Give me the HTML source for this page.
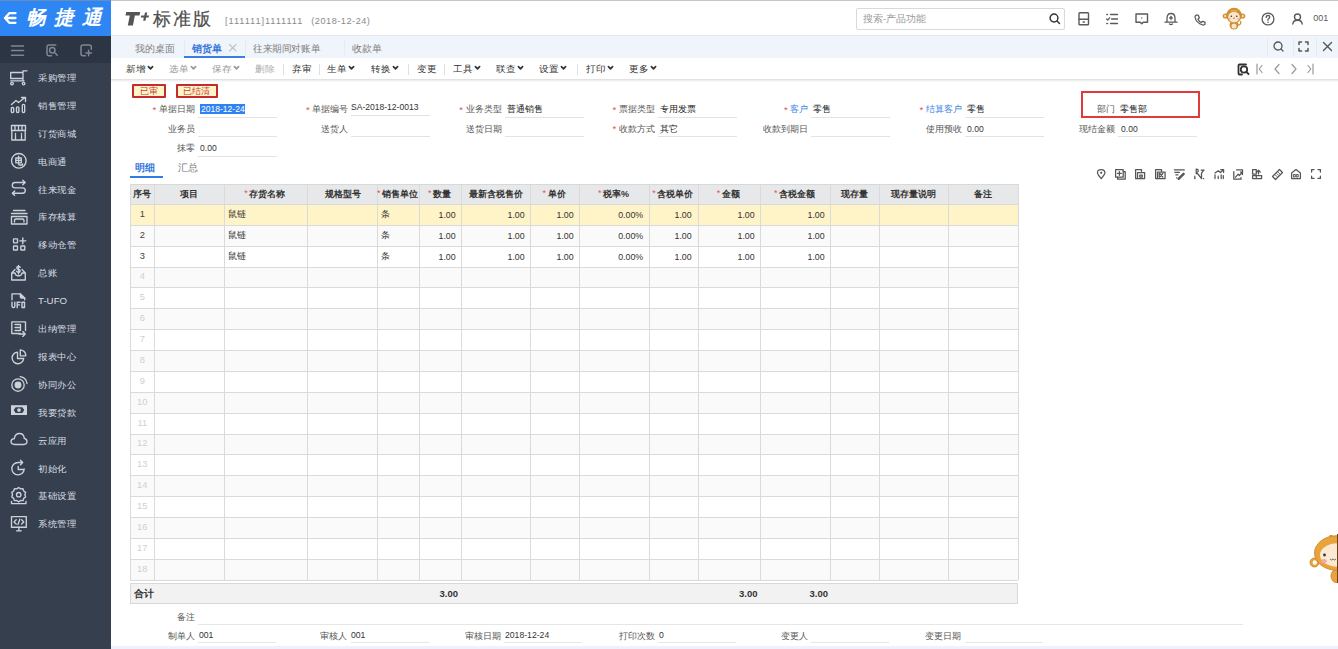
<!DOCTYPE html>
<html><head><meta charset="utf-8"><style>
html,body{margin:0;padding:0;width:1338px;height:649px;overflow:hidden;background:#fff;font-family:"Liberation Sans", sans-serif;}
.t{position:absolute;white-space:nowrap;line-height:1.2;}
.r{position:absolute;}
svg{overflow:visible;}
</style></head><body>
<div class="r" style="left:0px;top:0px;width:111px;height:649px;background:#353f4e;"></div>
<div class="r" style="left:0px;top:0px;width:111px;height:36px;background:#2e86f5;"></div>
<div class="r" style="left:0px;top:36px;width:111px;height:26.6px;background:#2c3544;"></div>
<svg style="position:absolute;left:0px;top:0px" width="20" height="36" viewBox="0 0 20 36" fill="none" stroke="#fff" stroke-width="2.3" stroke-linecap="round" stroke-linejoin="round" stroke-linecap="butt" stroke-linejoin="miter"><path d="M15.5 13.2H9.3L5 18L9.3 22.8H15.5M5.5 18H15.5"/></svg>
<div class="t" style="left:25.5px;top:6.2px;font-size:19.5px;color:#fff;font-weight:bold;font-style:italic;letter-spacing:8.3px;">畅捷通</div>
<svg style="position:absolute;left:11.2px;top:44.5px" width="13" height="12" viewBox="0 0 13 12" fill="none" stroke="#80868f" stroke-width="1.5" stroke-linecap="round" stroke-linejoin="round" stroke-linecap="butt"><path d="M0.5 1H12.5M0.5 5.6H12.5M0.5 10.3H12.5"/></svg>
<svg style="position:absolute;left:45.8px;top:44.2px" width="12" height="12" viewBox="0 0 12 12" fill="none" stroke="#80868f" stroke-width="1.5" stroke-linecap="round" stroke-linejoin="round" ><path d="M9.8 1H3Q1 1 1 3V9.8Q1 11.8 3 11.8H5.5"/><circle cx="6.3" cy="6.2" r="2.7"/><path d="M8.3 8.2L11.3 11.3"/></svg>
<svg style="position:absolute;left:79.8px;top:44.2px" width="12" height="12" viewBox="0 0 12 12" fill="none" stroke="#80868f" stroke-width="1.5" stroke-linecap="round" stroke-linejoin="round" stroke-linecap="butt"><path d="M11.3 5.2V3Q11.3 1 9.3 1H3Q1 1 1 3V9.8Q1 11.8 3 11.8H5.3"/><path d="M8.6 6.2V11.8M5.8 9H11.5"/></svg>
<svg style="position:absolute;left:11px;top:69.5px" width="16" height="16" viewBox="0 0 16 16" fill="none" stroke="#cdd2da" stroke-width="1.35" stroke-linecap="round" stroke-linejoin="round" ><path d="M16 0.8H12V10.5M-0.3 2.5H12M-0.3 2.5V8.5H12M-0.3 10.8H13"/><circle cx="1" cy="13.6" r="1.3"/><circle cx="12.6" cy="13.6" r="1.3"/></svg>
<div class="t" style="left:38.4px;top:71.9px;font-size:10px;color:#dadde3;font-weight:normal;transform:scale(0.97,0.93);transform-origin:0 50%;">采购管理</div>
<svg style="position:absolute;left:11px;top:97.4px" width="16" height="16" viewBox="0 0 16 16" fill="none" stroke="#cdd2da" stroke-width="1.35" stroke-linecap="round" stroke-linejoin="round" ><path d="M0.5 7.5L5 3.5L7.5 5.5L14 0.5M10.5 0.5H14.5V4.5"/><rect x="0.3" y="10.5" width="2.4" height="5" rx="1.1"/><rect x="5.5" y="9.8" width="2.4" height="5.7" rx="1.1"/><rect x="11.3" y="7.3" width="2.4" height="8.2" rx="1.1"/></svg>
<div class="t" style="left:38.4px;top:99.8px;font-size:10px;color:#dadde3;font-weight:normal;transform:scale(0.97,0.93);transform-origin:0 50%;">销售管理</div>
<svg style="position:absolute;left:11px;top:125.3px" width="16" height="16" viewBox="0 0 16 16" fill="none" stroke="#cdd2da" stroke-width="1.35" stroke-linecap="round" stroke-linejoin="round" ><path d="M0.5 0.5H14.5V5.5H0.5ZM4 0.5V5.5M7.5 0.5V5.5M11 0.5V5.5M0.8 5.5V15H14.2V5.5M4.5 15V10.5M10.5 15V10.5"/><path d="M4.5 8.5V9.3M10.5 8.5V9.3"/></svg>
<div class="t" style="left:38.4px;top:127.7px;font-size:10px;color:#dadde3;font-weight:normal;transform:scale(0.97,0.93);transform-origin:0 50%;">订货商城</div>
<svg style="position:absolute;left:11px;top:153.2px" width="16" height="16" viewBox="0 0 16 16" fill="none" stroke="#cdd2da" stroke-width="1.35" stroke-linecap="round" stroke-linejoin="round" ><circle cx="7.8" cy="7.8" r="7.3"/><path d="M4.8 5H10.3V9.8H4.8ZM4.8 7.4H10.3M7.6 3.2V10.8Q7.6 12 8.8 12H11.5V11"/></svg>
<div class="t" style="left:38.4px;top:155.6px;font-size:10px;color:#dadde3;font-weight:normal;transform:scale(0.97,0.93);transform-origin:0 50%;">电商通</div>
<svg style="position:absolute;left:11px;top:181.1px" width="16" height="16" viewBox="0 0 16 16" fill="none" stroke="#cdd2da" stroke-width="1.35" stroke-linecap="round" stroke-linejoin="round" ><path d="M14 1.5H4Q1.3 1.5 1.3 4.2Q1.3 6.8 4 6.8H11.5Q14.3 6.8 14.3 9.5Q14.3 12.2 11.5 12.2H1.5M11.8 -0.7L14.2 1.5L11.8 3.7M3.7 10L1.3 12.2L3.7 14.4"/></svg>
<div class="t" style="left:38.4px;top:183.5px;font-size:10px;color:#dadde3;font-weight:normal;transform:scale(0.97,0.93);transform-origin:0 50%;">往来现金</div>
<svg style="position:absolute;left:11px;top:209.0px" width="16" height="16" viewBox="0 0 16 16" fill="none" stroke="#cdd2da" stroke-width="1.35" stroke-linecap="round" stroke-linejoin="round" ><path d="M2.5 1.5H14M0.5 4.5H16M0.5 7.5H16V15H0.5ZM3.5 13V11.5Q3.5 10 5 10H11.5Q13 10 13 11.5V13"/></svg>
<div class="t" style="left:38.4px;top:211.4px;font-size:10px;color:#dadde3;font-weight:normal;transform:scale(0.97,0.93);transform-origin:0 50%;">库存核算</div>
<svg style="position:absolute;left:11px;top:236.9px" width="16" height="16" viewBox="0 0 16 16" fill="none" stroke="#cdd2da" stroke-width="1.35" stroke-linecap="round" stroke-linejoin="round" ><rect x="2.5" y="1.8" width="4" height="4" rx="0.5"/><rect x="2.5" y="9" width="4" height="4" rx="0.5"/><rect x="9.8" y="9" width="4" height="4" rx="0.5"/><path d="M11.8 0.8V6.8M8.8 3.8H14.8"/></svg>
<div class="t" style="left:38.4px;top:239.3px;font-size:10px;color:#dadde3;font-weight:normal;transform:scale(0.97,0.93);transform-origin:0 50%;">移动仓管</div>
<svg style="position:absolute;left:11px;top:264.8px" width="16" height="16" viewBox="0 0 16 16" fill="none" stroke="#cdd2da" stroke-width="1.35" stroke-linecap="round" stroke-linejoin="round" ><path d="M4 4.5L0.7 8V15H14.3V8L11 4.5M0.7 8H4Q4.5 11 7.5 11Q10.5 11 11 8H14.3"/><path d="M9.3 2.3Q8.5 1.3 7.2 1.5Q5.6 1.8 5.8 3.2Q6 4.2 7.5 4.5Q9.3 4.9 9.2 6.1Q9 7.4 7.4 7.4Q6 7.4 5.5 6.3M7.5 0.3V9"/></svg>
<div class="t" style="left:38.4px;top:267.2px;font-size:10px;color:#dadde3;font-weight:normal;transform:scale(0.97,0.93);transform-origin:0 50%;">总账</div>
<svg style="position:absolute;left:11px;top:292.7px" width="16" height="16" viewBox="0 0 16 16" fill="none" stroke="#cdd2da" stroke-width="1.35" stroke-linecap="round" stroke-linejoin="round" ><path d="M1 6.8V0.8H9.3L13.7 5V6.8"/><path d="M9.3 0.8V3.5Q9.3 5 10.8 5H13.7" fill="#cdd2da"/><path d="M1 9.3V13.3Q1 14.5 2.5 14.5Q3.8 14.5 3.8 13.3V9.3M6.2 14.8V9.3H9M6.2 11.9H8.5M11 9.3H13.5V14.5H11Z" stroke-width="1.4"/></svg>
<div class="t" style="left:38.4px;top:295.1px;font-size:10px;color:#dadde3;font-weight:normal;transform:scale(0.97,0.93);transform-origin:0 50%;">T-UFO</div>
<svg style="position:absolute;left:11px;top:320.6px" width="16" height="16" viewBox="0 0 16 16" fill="none" stroke="#cdd2da" stroke-width="1.35" stroke-linecap="round" stroke-linejoin="round" ><path d="M14.5 9.5V0.8H0.8V12.5H9"/><path d="M4 3.5H9.5V9.5H4M4 6.5H8.5M8 13H14.2M11.8 10.6L14.2 13L11.8 15.4"/></svg>
<div class="t" style="left:38.4px;top:323.0px;font-size:10px;color:#dadde3;font-weight:normal;transform:scale(0.97,0.93);transform-origin:0 50%;">出纳管理</div>
<svg style="position:absolute;left:11px;top:348.5px" width="16" height="16" viewBox="0 0 16 16" fill="none" stroke="#cdd2da" stroke-width="1.35" stroke-linecap="round" stroke-linejoin="round" ><path d="M6.5 3.2A5.8 5.8 0 1 0 12.7 9.5H6.5Z"/><path d="M9.3 0.8V6.8H14.8Q14.8 1.5 9.3 0.8Z"/></svg>
<div class="t" style="left:38.4px;top:350.9px;font-size:10px;color:#dadde3;font-weight:normal;transform:scale(0.97,0.93);transform-origin:0 50%;">报表中心</div>
<svg style="position:absolute;left:11px;top:376.4px" width="16" height="16" viewBox="0 0 16 16" fill="none" stroke="#cdd2da" stroke-width="1.35" stroke-linecap="round" stroke-linejoin="round" ><circle cx="7" cy="9" r="6.2"/><circle cx="7" cy="9" r="2.8" fill="#cdd2da"/><path d="M9.2 0.7Q15.2 1.5 16 7.5"/></svg>
<div class="t" style="left:38.4px;top:378.8px;font-size:10px;color:#dadde3;font-weight:normal;transform:scale(0.97,0.93);transform-origin:0 50%;">协同办公</div>
<svg style="position:absolute;left:11px;top:404.3px" width="16" height="16" viewBox="0 0 16 16" fill="none" stroke="#cdd2da" stroke-width="1.35" stroke-linecap="round" stroke-linejoin="round" ><rect x="0" y="1.2" width="16" height="9.8" fill="#cdd2da" stroke="none"/><path d="M2.8 6.1L4.6 3.2H11.4L13.2 6.1L11.4 9H4.6Z" fill="#353f4e" stroke="none"/><circle cx="8" cy="6.1" r="1.9" fill="#cdd2da" stroke="none"/></svg>
<div class="t" style="left:38.4px;top:406.7px;font-size:10px;color:#dadde3;font-weight:normal;transform:scale(0.97,0.93);transform-origin:0 50%;">我要贷款</div>
<svg style="position:absolute;left:11px;top:432.2px" width="16" height="16" viewBox="0 0 16 16" fill="none" stroke="#cdd2da" stroke-width="1.35" stroke-linecap="round" stroke-linejoin="round" ><path d="M3.8 12.5Q0 12.5 0 9.6Q0 6.9 3.3 6.6Q4 1.5 8.5 1.5Q12.7 1.5 13.3 6.3Q16 6.9 16 9.6Q16 12.5 12.6 12.5Z"/></svg>
<div class="t" style="left:38.4px;top:434.6px;font-size:10px;color:#dadde3;font-weight:normal;transform:scale(0.97,0.93);transform-origin:0 50%;">云应用</div>
<svg style="position:absolute;left:11px;top:460.1px" width="16" height="16" viewBox="0 0 16 16" fill="none" stroke="#cdd2da" stroke-width="1.35" stroke-linecap="round" stroke-linejoin="round" ><path d="M13.2 9A6.2 6.2 0 1 1 7 2.5H11.5M9.5 0.3L11.7 2.5L9.5 4.7"/><path d="M7.2 6.5V9.5H12.5"/></svg>
<div class="t" style="left:38.4px;top:462.5px;font-size:10px;color:#dadde3;font-weight:normal;transform:scale(0.97,0.93);transform-origin:0 50%;">初始化</div>
<svg style="position:absolute;left:11px;top:488.0px" width="16" height="16" viewBox="0 0 16 16" fill="none" stroke="#cdd2da" stroke-width="1.35" stroke-linecap="round" stroke-linejoin="round" ><path d="M7.7 -0.5L9.6 0.9L12 0.7L12.7 3L14.6 4.4L13.9 6.7L14.6 9L12.7 10.4L12 12.7L9.6 12.5L7.7 13.9L5.8 12.5L3.4 12.7L2.7 10.4L0.8 9L1.5 6.7L0.8 4.4L2.7 3L3.4 0.7L5.8 0.9Z"/><circle cx="7.7" cy="6.7" r="2.2"/><path d="M0.5 13.3V15.6H15V13.3"/></svg>
<div class="t" style="left:38.4px;top:490.4px;font-size:10px;color:#dadde3;font-weight:normal;transform:scale(0.97,0.93);transform-origin:0 50%;">基础设置</div>
<svg style="position:absolute;left:11px;top:515.9px" width="16" height="16" viewBox="0 0 16 16" fill="none" stroke="#cdd2da" stroke-width="1.35" stroke-linecap="round" stroke-linejoin="round" ><rect x="0.5" y="0.6" width="14.8" height="10.6"/><path d="M5.5 14.8H10.3M7.9 11.2V14.8M5.2 3.8L3 5.9L5.2 8M10.6 3.8L12.8 5.9L10.6 8M8.8 3.3L7 8.5"/></svg>
<div class="t" style="left:38.4px;top:518.3px;font-size:10px;color:#dadde3;font-weight:normal;transform:scale(0.97,0.93);transform-origin:0 50%;">系统管理</div>
<div class="r" style="left:111px;top:0px;width:1227px;height:36px;background:#fff;"></div>
<div class="r" style="left:111px;top:35px;width:1227px;height:1px;background:#e3e6ea;"></div>
<svg style="position:absolute;left:0;top:0" width="160" height="36"><path fill="#555" d="M126.2 12H140.2L139.5 15.6H134.9L132.9 25.6H127.8L129.8 15.6H125.5Z"/><path fill="#555" d="M145 12.5H147.3L146.6 15.4H149L148.6 17.6H146.1L145.5 20.7H143.2L143.8 17.6H140.8L141.2 15.4H144.3Z"/></svg>
<div class="t" style="left:152.5px;top:8.6px;font-size:17.5px;color:#4d4d4d;font-weight:normal;letter-spacing:2.2px;-webkit-text-stroke:0.2px #4d4d4d;">标准版</div>
<div class="t" style="left:225px;top:16.3px;font-size:9.2px;color:#8a8a8a;font-weight:normal;letter-spacing:0.95px;">[111111]1111111</div>
<div class="t" style="left:311.3px;top:16.3px;font-size:9.2px;color:#8a8a8a;font-weight:normal;letter-spacing:0.5px;">(2018-12-24)</div>
<div class="r" style="left:856px;top:7.8px;width:208.5px;height:22px;background:#fff;border:1px solid #d9d9d9;box-sizing:border-box;border-radius:2px;"></div>
<div class="t" style="left:863px;top:13px;font-size:9.5px;color:#9a9a9a;font-weight:normal;">搜索-产品功能</div>
<svg style="position:absolute;left:1048.8px;top:13.2px" width="12" height="12" viewBox="0 0 12 12" fill="none" stroke="#333" stroke-width="1.45" stroke-linecap="round" stroke-linejoin="round" ><circle cx="5" cy="5" r="3.9"/><path d="M8 8L10.5 10.5"/></svg>
<svg style="position:absolute;left:1077.5px;top:12.2px" width="12" height="14" viewBox="0 0 12 14" fill="none" stroke="#5a5a5a" stroke-width="1.4" stroke-linecap="round" stroke-linejoin="round" ><rect x="1" y="0.8" width="9.5" height="12" rx="0.8"/><path d="M1 7.3H10.5"/><path d="M5.2 10H6.3" stroke-width="1.6"/></svg>
<svg style="position:absolute;left:1106px;top:12.5px" width="12" height="12" viewBox="0 0 12 12" fill="none" stroke="#5a5a5a" stroke-width="1.3" stroke-linecap="round" stroke-linejoin="round" ><path d="M4.5 1.5H11.5M5.5 6H11.5M4.5 10.5H11.5M0.8 1.5H1.6M0.8 10.5H1.6M0.7 6L1.8 7.1L3.6 4.8"/></svg>
<svg style="position:absolute;left:1135px;top:13px" width="13.5" height="12" viewBox="0 0 13.5 12" fill="none" stroke="#5a5a5a" stroke-width="1.4" stroke-linecap="round" stroke-linejoin="round" ><path d="M1 1H12.5V9.2H8.3L6.75 10.8L5.2 9.2H1Z"/><circle cx="6.75" cy="5" r="0.7" fill="#5a5a5a" stroke="none"/></svg>
<svg style="position:absolute;left:1164px;top:12px" width="14" height="13" viewBox="0 0 14 13" fill="none" stroke="#5a5a5a" stroke-width="1.3" stroke-linecap="round" stroke-linejoin="round" ><path d="M3 10.2V6.2Q3 1.5 7 1.5Q11 1.5 11 6.2V10.2M1 10.2H13M5.5 12Q7 13.2 8.5 12M7 4.5V7.5M5.8 6L7 4.8L8.2 6"/></svg>
<svg style="position:absolute;left:1194px;top:13.5px" width="12" height="12" viewBox="0 0 12 12" fill="none" stroke="#5a5a5a" stroke-width="1.3" stroke-linecap="round" stroke-linejoin="round" ><path d="M2.3 1.2L4.3 1.2L5.3 3.8L4 5.2Q5 7.5 7.2 8.5L8.5 7.3L11 8.2V10.2Q10.3 11.2 8.8 11Q2 9 1 3Q1.2 1.5 2.3 1.2Z"/></svg>
<svg style="position:absolute;left:1222px;top:7px" width="24" height="23" viewBox="0 0 24 23"><circle cx="3.3" cy="9" r="2.6" fill="#d08f30"/><circle cx="20.7" cy="9" r="2.6" fill="#d08f30"/><circle cx="3.3" cy="9" r="1.2" fill="#f5dcc0"/><circle cx="20.7" cy="9" r="1.2" fill="#f5dcc0"/><path d="M16 18Q19.5 18 18.5 14" stroke="#d08f30" stroke-width="1.3" fill="none"/><ellipse cx="12" cy="18" rx="4.5" ry="4.5" fill="#d08f30"/><ellipse cx="12" cy="19" rx="2.5" ry="2.6" fill="#fbe6cc"/><circle cx="12" cy="8.6" r="7.8" fill="#d08f30"/><ellipse cx="12" cy="10" rx="5.8" ry="5.2" fill="#fbe6cc"/><path d="M8 3.8Q12 1.5 16 3.8Q14 5.3 12 4.2Q10 5.3 8 3.8Z" fill="#e8a845"/><circle cx="9.3" cy="9.3" r="0.8" fill="#333"/><circle cx="14.7" cy="9.3" r="0.8" fill="#333"/><ellipse cx="12" cy="11.2" rx="1" ry="0.8" fill="#c77"/><circle cx="7.8" cy="11.8" r="1.1" fill="#f5b5b5"/><circle cx="16.2" cy="11.8" r="1.1" fill="#f5b5b5"/></svg>
<svg style="position:absolute;left:1261.3px;top:11.6px" width="14" height="14" viewBox="0 0 14 14" fill="none" stroke="#5a5a5a" stroke-width="1.3" stroke-linecap="round" stroke-linejoin="round" ><circle cx="7" cy="7" r="5.9"/><path d="M5.2 5.4Q5.2 3.5 7 3.5Q8.8 3.5 8.8 5.1Q8.8 6.2 7 7.2V8.3M7 10.2V10.4"/></svg>
<svg style="position:absolute;left:1291.5px;top:12.8px" width="11" height="12" viewBox="0 0 11 12" fill="none" stroke="#5a5a5a" stroke-width="1.4" stroke-linecap="round" stroke-linejoin="round" ><circle cx="5.5" cy="4" r="3"/><path d="M0.8 11Q1.2 7.3 5.5 7.3Q9.8 7.3 10.2 11"/></svg>
<div class="t" style="left:1313.3px;top:12.8px;font-size:9px;color:#5a5a5a;font-weight:normal;">001</div>
<div class="r" style="left:0px;top:0px;width:1338px;height:1px;background:rgba(150,150,150,0.55);"></div>
<div class="r" style="left:111px;top:36px;width:1227px;height:22px;background:#f0f4fb;"></div>
<div class="t" style="left:134.8px;top:42.8px;font-size:9.6px;color:#808080;font-weight:normal;">我的桌面</div>
<div class="t" style="left:191.5px;top:42.8px;font-size:9.6px;color:#3578de;font-weight:bold;">销货单</div>
<svg style="position:absolute;left:229.2px;top:44.2px" width="7.5" height="7.5" viewBox="0 0 7.5 7.5" fill="none" stroke="#c2c2c2" stroke-width="1.1" stroke-linecap="round" stroke-linejoin="round" ><path d="M0.5 0.5L7 7M7 0.5L0.5 7"/></svg>
<div class="r" style="left:184px;top:56px;width:61px;height:2px;background:#3a7ee2;"></div>
<div class="r" style="left:183.5px;top:39px;width:1px;height:16px;background:#e6ebf3;"></div>
<div class="r" style="left:244.5px;top:39px;width:1px;height:16px;background:#e6ebf3;"></div>
<div class="t" style="left:252.7px;top:42.8px;font-size:10px;color:#808080;font-weight:normal;transform:scaleX(0.96);transform-origin:0 0;">往来期间对账单</div>
<div class="r" style="left:344px;top:39px;width:1px;height:16px;background:#e6ebf3;"></div>
<div class="t" style="left:352px;top:42.8px;font-size:9.6px;color:#808080;font-weight:normal;">收款单</div>
<div class="r" style="left:1267px;top:38px;width:1px;height:18px;background:#e6ebf3;"></div>
<div class="r" style="left:1292.5px;top:38px;width:1px;height:18px;background:#e6ebf3;"></div>
<div class="r" style="left:1316px;top:38px;width:1px;height:18px;background:#e6ebf3;"></div>
<svg style="position:absolute;left:1272.5px;top:41px" width="11" height="11" viewBox="0 0 11 11" fill="none" stroke="#555" stroke-width="1.3" stroke-linecap="round" stroke-linejoin="round" ><circle cx="5" cy="5" r="4"/><path d="M8 8L10 10"/></svg>
<svg style="position:absolute;left:1298px;top:41px" width="11" height="11" viewBox="0 0 11 11" fill="none" stroke="#555" stroke-width="1.5" stroke-linecap="round" stroke-linejoin="round" stroke-linecap="butt" stroke-linejoin="miter"><path d="M1 3.5V1H3.5M7.5 1H10V3.5M10 7.5V10H7.5M3.5 10H1V7.5"/></svg>
<svg style="position:absolute;left:1322px;top:41px" width="11" height="11" viewBox="0 0 11 11" fill="none" stroke="#555" stroke-width="1.4" stroke-linecap="round" stroke-linejoin="round" ><path d="M1.5 1.5L9.5 9.5M9.5 1.5L1.5 9.5"/></svg>
<div class="r" style="left:111px;top:58px;width:1227px;height:21px;background:#fff;"></div>
<div class="r" style="left:111px;top:79px;width:1227px;height:1px;background:#e2e2e2;"></div>
<div class="r" style="left:111px;top:80px;width:1227px;height:1px;background:#f0f0f0;"></div>
<div class="r" style="left:111px;top:81px;width:1227px;height:1px;background:#f8f8f8;"></div>
<div class="t" style="left:125.5px;top:63.0px;font-size:10px;color:#333;font-weight:normal;transform:scale(0.96,0.9);transform-origin:0 50%;">新增</div>
<svg style="position:absolute;left:146.7px;top:64.6px" width="7" height="6" viewBox="0 0 7 6" fill="none" stroke="#333" stroke-width="1.7" stroke-linecap="round" stroke-linejoin="round" stroke-linecap="butt"><path d="M1.4 1.7L3.5 3.8L5.6 1.7"/></svg>
<div class="t" style="left:168.5px;top:63.0px;font-size:10px;color:#999;font-weight:normal;transform:scale(0.96,0.9);transform-origin:0 50%;">选单</div>
<svg style="position:absolute;left:189.7px;top:64.6px" width="7" height="6" viewBox="0 0 7 6" fill="none" stroke="#999" stroke-width="1.7" stroke-linecap="round" stroke-linejoin="round" stroke-linecap="butt"><path d="M1.4 1.7L3.5 3.8L5.6 1.7"/></svg>
<div class="t" style="left:212px;top:63.0px;font-size:10px;color:#999;font-weight:normal;transform:scale(0.96,0.9);transform-origin:0 50%;">保存</div>
<svg style="position:absolute;left:233.2px;top:64.6px" width="7" height="6" viewBox="0 0 7 6" fill="none" stroke="#999" stroke-width="1.7" stroke-linecap="round" stroke-linejoin="round" stroke-linecap="butt"><path d="M1.4 1.7L3.5 3.8L5.6 1.7"/></svg>
<div class="t" style="left:254.5px;top:63.0px;font-size:10px;color:#aaa;font-weight:normal;transform:scale(0.96,0.9);transform-origin:0 50%;">删除</div>
<div class="t" style="left:291.5px;top:63.0px;font-size:10px;color:#333;font-weight:normal;transform:scale(0.96,0.9);transform-origin:0 50%;">弃审</div>
<div class="t" style="left:327px;top:63.0px;font-size:10px;color:#333;font-weight:normal;transform:scale(0.96,0.9);transform-origin:0 50%;">生单</div>
<svg style="position:absolute;left:348.2px;top:64.6px" width="7" height="6" viewBox="0 0 7 6" fill="none" stroke="#333" stroke-width="1.7" stroke-linecap="round" stroke-linejoin="round" stroke-linecap="butt"><path d="M1.4 1.7L3.5 3.8L5.6 1.7"/></svg>
<div class="t" style="left:371px;top:63.0px;font-size:10px;color:#333;font-weight:normal;transform:scale(0.96,0.9);transform-origin:0 50%;">转换</div>
<svg style="position:absolute;left:392.2px;top:64.6px" width="7" height="6" viewBox="0 0 7 6" fill="none" stroke="#333" stroke-width="1.7" stroke-linecap="round" stroke-linejoin="round" stroke-linecap="butt"><path d="M1.4 1.7L3.5 3.8L5.6 1.7"/></svg>
<div class="t" style="left:416.5px;top:63.0px;font-size:10px;color:#333;font-weight:normal;transform:scale(0.96,0.9);transform-origin:0 50%;">变更</div>
<div class="t" style="left:453px;top:63.0px;font-size:10px;color:#333;font-weight:normal;transform:scale(0.96,0.9);transform-origin:0 50%;">工具</div>
<svg style="position:absolute;left:474.2px;top:64.6px" width="7" height="6" viewBox="0 0 7 6" fill="none" stroke="#333" stroke-width="1.7" stroke-linecap="round" stroke-linejoin="round" stroke-linecap="butt"><path d="M1.4 1.7L3.5 3.8L5.6 1.7"/></svg>
<div class="t" style="left:496px;top:63.0px;font-size:10px;color:#333;font-weight:normal;transform:scale(0.96,0.9);transform-origin:0 50%;">联查</div>
<svg style="position:absolute;left:517.2px;top:64.6px" width="7" height="6" viewBox="0 0 7 6" fill="none" stroke="#333" stroke-width="1.7" stroke-linecap="round" stroke-linejoin="round" stroke-linecap="butt"><path d="M1.4 1.7L3.5 3.8L5.6 1.7"/></svg>
<div class="t" style="left:539px;top:63.0px;font-size:10px;color:#333;font-weight:normal;transform:scale(0.96,0.9);transform-origin:0 50%;">设置</div>
<svg style="position:absolute;left:560.2px;top:64.6px" width="7" height="6" viewBox="0 0 7 6" fill="none" stroke="#333" stroke-width="1.7" stroke-linecap="round" stroke-linejoin="round" stroke-linecap="butt"><path d="M1.4 1.7L3.5 3.8L5.6 1.7"/></svg>
<div class="t" style="left:585.5px;top:63.0px;font-size:10px;color:#333;font-weight:normal;transform:scale(0.96,0.9);transform-origin:0 50%;">打印</div>
<svg style="position:absolute;left:606.7px;top:64.6px" width="7" height="6" viewBox="0 0 7 6" fill="none" stroke="#333" stroke-width="1.7" stroke-linecap="round" stroke-linejoin="round" stroke-linecap="butt"><path d="M1.4 1.7L3.5 3.8L5.6 1.7"/></svg>
<div class="t" style="left:628.5px;top:63.0px;font-size:10px;color:#333;font-weight:normal;transform:scale(0.96,0.9);transform-origin:0 50%;">更多</div>
<svg style="position:absolute;left:649.7px;top:64.6px" width="7" height="6" viewBox="0 0 7 6" fill="none" stroke="#333" stroke-width="1.7" stroke-linecap="round" stroke-linejoin="round" stroke-linecap="butt"><path d="M1.4 1.7L3.5 3.8L5.6 1.7"/></svg>
<div class="r" style="left:282.5px;top:64px;width:1px;height:10.5px;background:#e0e0e0;"></div>
<div class="r" style="left:319px;top:64px;width:1px;height:10.5px;background:#e0e0e0;"></div>
<div class="r" style="left:408px;top:64px;width:1px;height:10.5px;background:#e0e0e0;"></div>
<div class="r" style="left:444px;top:64px;width:1px;height:10.5px;background:#e0e0e0;"></div>
<div class="r" style="left:576.5px;top:64px;width:1px;height:10.5px;background:#e0e0e0;"></div>
<svg style="position:absolute;left:1237px;top:63px" width="12" height="12" viewBox="0 0 12 12" fill="none" stroke="#333" stroke-width="1.8" stroke-linecap="round" stroke-linejoin="round" ><path d="M9 1.5H2.5Q1.5 1.5 1.5 2.5V10.5Q1.5 11.5 2.5 11.5H5"/><circle cx="7" cy="6.5" r="3.2"/><path d="M9.3 8.8L11.5 11"/></svg>
<svg style="position:absolute;left:1256px;top:63px" width="8" height="12" viewBox="0 0 8 12" fill="none" stroke="#999" stroke-width="1.2" stroke-linecap="round" stroke-linejoin="round" ><path d="M1 1V11M6 2.5L3.2 6L6 9.5"/></svg>
<svg style="position:absolute;left:1273px;top:63px" width="8" height="12" viewBox="0 0 8 12" fill="none" stroke="#999" stroke-width="1.2" stroke-linecap="round" stroke-linejoin="round" ><path d="M6 1.5L2 6L6 10.5"/></svg>
<svg style="position:absolute;left:1289.5px;top:63px" width="8" height="12" viewBox="0 0 8 12" fill="none" stroke="#999" stroke-width="1.2" stroke-linecap="round" stroke-linejoin="round" ><path d="M2 1.5L6 6L2 10.5"/></svg>
<svg style="position:absolute;left:1306px;top:63px" width="8" height="12" viewBox="0 0 8 12" fill="none" stroke="#999" stroke-width="1.2" stroke-linecap="round" stroke-linejoin="round" ><path d="M7 1V11M2 2.5L4.8 6L2 9.5"/></svg>
<div class="r" style="left:131.5px;top:83.5px;width:34px;height:14px;box-sizing:border-box;border:2px solid #c42b2b;background:#fdf6c8;border-radius:1px"></div><div class="t" style="left:48.5px;width:200px;text-align:center;top:85.5px;font-size:8.7px;color:#d03a3a;font-weight:normal;">已审</div>
<div class="r" style="left:175.5px;top:83.5px;width:42px;height:14px;box-sizing:border-box;border:2px solid #c42b2b;background:#fdf6c8;border-radius:1px"></div><div class="t" style="left:96.5px;width:200px;text-align:center;top:85.5px;font-size:8.7px;color:#d03a3a;font-weight:normal;">已结清</div>
<div class="t" style="right:1143.2px;top:104.3px;font-size:9px;color:#555;font-weight:normal;">单据日期</div><div class="t" style="left:152.60000000000002px;top:104.10000000000001px;font-size:9.5px;color:#e05555;font-weight:normal;">*</div><div class="r" style="left:197.8px;top:116.8px;width:79px;height:1px;background:#e3e3e3;"></div>
<div class="r" style="left:199.8px;top:104px;width:45px;height:10px;background:#2f83f0;"></div>
<div class="t" style="left:200.5px;top:104px;font-size:9.2px;color:#fff;font-weight:normal;transform:scaleX(0.93);transform-origin:0 0;">2018-12-24</div>
<div class="t" style="right:989.7px;top:104.3px;font-size:9px;color:#555;font-weight:normal;">单据编号</div><div class="t" style="left:306.1px;top:104.10000000000001px;font-size:9.5px;color:#e05555;font-weight:normal;">*</div><div class="t" style="left:351.3px;top:102.3px;font-size:9.2px;color:#333;font-weight:normal;transform:scaleX(0.93);transform-origin:0 0;">SA-2018-12-0013</div><div class="r" style="left:351.3px;top:114.8px;width:79px;height:1px;background:#e3e3e3;"></div>
<div class="t" style="right:836.5px;top:104.3px;font-size:9px;color:#555;font-weight:normal;">业务类型</div><div class="t" style="left:459.3px;top:104.10000000000001px;font-size:9.5px;color:#e05555;font-weight:normal;">*</div><div class="t" style="left:506.5px;top:104.3px;font-size:9px;color:#222;font-weight:normal;">普通销售</div><div class="r" style="left:504.5px;top:116.8px;width:79px;height:1px;background:#e3e3e3;"></div>
<div class="t" style="right:683.2px;top:104.3px;font-size:9px;color:#555;font-weight:normal;">票据类型</div><div class="t" style="left:612.5999999999999px;top:104.10000000000001px;font-size:9.5px;color:#e05555;font-weight:normal;">*</div><div class="t" style="left:659.8px;top:104.3px;font-size:9px;color:#222;font-weight:normal;">专用发票</div><div class="r" style="left:657.8px;top:116.8px;width:79px;height:1px;background:#e3e3e3;"></div>
<div class="t" style="right:529.8px;top:104.3px;font-size:9px;color:#3b84e6;font-weight:normal;">客户</div><div class="t" style="left:784.0px;top:104.10000000000001px;font-size:9.5px;color:#e05555;font-weight:normal;">*</div><div class="t" style="left:813.2px;top:104.3px;font-size:9px;color:#222;font-weight:normal;">零售</div><div class="r" style="left:811.2px;top:116.8px;width:79px;height:1px;background:#e3e3e3;"></div>
<div class="t" style="right:376.29999999999995px;top:104.3px;font-size:9px;color:#3b84e6;font-weight:normal;">结算客户</div><div class="t" style="left:919.5px;top:104.10000000000001px;font-size:9.5px;color:#e05555;font-weight:normal;">*</div><div class="t" style="left:966.7px;top:104.3px;font-size:9px;color:#222;font-weight:normal;">零售</div><div class="r" style="left:964.7px;top:116.8px;width:79px;height:1px;background:#e3e3e3;"></div>
<div class="t" style="right:223.0px;top:104.3px;font-size:9px;color:#555;font-weight:normal;">部门</div><div class="t" style="left:1120.0px;top:104.3px;font-size:9px;color:#222;font-weight:normal;">零售部</div><div class="r" style="left:1118.0px;top:116.8px;width:79px;height:1px;background:#e3e3e3;"></div>
<div class="r" style="left:1081.3px;top:91px;width:119px;height:26.5px;background:transparent;border:2px solid #e03a3a;box-sizing:border-box;"></div>
<div class="t" style="right:1143.2px;top:123.6px;font-size:9px;color:#555;font-weight:normal;">业务员</div><div class="r" style="left:197.8px;top:136.1px;width:79px;height:1px;background:#e3e3e3;"></div>
<div class="t" style="right:989.7px;top:123.6px;font-size:9px;color:#555;font-weight:normal;">送货人</div><div class="r" style="left:351.3px;top:136.1px;width:79px;height:1px;background:#e3e3e3;"></div>
<div class="t" style="right:836.5px;top:123.6px;font-size:9px;color:#555;font-weight:normal;">送货日期</div><div class="r" style="left:504.5px;top:136.1px;width:79px;height:1px;background:#e3e3e3;"></div>
<div class="t" style="right:683.2px;top:123.6px;font-size:9px;color:#555;font-weight:normal;">收款方式</div><div class="t" style="left:612.5999999999999px;top:123.4px;font-size:9.5px;color:#e05555;font-weight:normal;">*</div><div class="t" style="left:659.8px;top:123.6px;font-size:9px;color:#222;font-weight:normal;">其它</div><div class="r" style="left:657.8px;top:136.1px;width:79px;height:1px;background:#e3e3e3;"></div>
<div class="t" style="right:529.8px;top:123.6px;font-size:9px;color:#555;font-weight:normal;">收款到期日</div><div class="r" style="left:811.2px;top:136.1px;width:79px;height:1px;background:#e3e3e3;"></div>
<div class="t" style="right:376.29999999999995px;top:123.6px;font-size:9px;color:#555;font-weight:normal;">使用预收</div><div class="t" style="left:967.2px;top:123.6px;font-size:9.2px;color:#333;font-weight:normal;transform:scaleX(0.93);transform-origin:0 0;">0.00</div><div class="r" style="left:964.7px;top:136.1px;width:79px;height:1px;background:#e3e3e3;"></div>
<div class="t" style="right:223.0px;top:123.6px;font-size:9px;color:#555;font-weight:normal;">现结金额</div><div class="t" style="left:1120.5px;top:123.6px;font-size:9.2px;color:#333;font-weight:normal;transform:scaleX(0.93);transform-origin:0 0;">0.00</div><div class="r" style="left:1118.0px;top:136.1px;width:79px;height:1px;background:#e3e3e3;"></div>
<div class="t" style="right:1143.2px;top:143.1px;font-size:9px;color:#555;font-weight:normal;">抹零</div><div class="t" style="left:200.3px;top:143.1px;font-size:9.2px;color:#333;font-weight:normal;transform:scaleX(0.93);transform-origin:0 0;">0.00</div><div class="r" style="left:197.8px;top:155.6px;width:79px;height:1px;background:#e3e3e3;"></div>
<div class="t" style="left:135px;top:162px;font-size:9.8px;color:#3578de;font-weight:bold;">明细</div>
<div class="t" style="left:178px;top:162px;font-size:10px;color:#777;font-weight:normal;">汇总</div>
<div class="r" style="left:130px;top:176px;width:33px;height:2px;background:#2e7ce6;"></div>
<svg style="position:absolute;left:1096.5px;top:169px" width="10" height="10" viewBox="0 0 10 10" fill="none" stroke="#555" stroke-width="1.25" stroke-linecap="round" stroke-linejoin="round" stroke-linecap="butt" stroke-linejoin="miter"><path d="M4.2 9.6Q0.5 5.5 0.5 3.8Q0.5 0.5 4.2 0.5Q7.9 0.5 7.9 3.8Q7.9 5.5 4.2 9.6Z"/><circle cx="4.2" cy="3.8" r="1.1" fill="#555" stroke="none"/></svg>
<svg style="position:absolute;left:1115.3px;top:169px" width="10" height="10" viewBox="0 0 10 10" fill="none" stroke="#555" stroke-width="1.25" stroke-linecap="round" stroke-linejoin="round" stroke-linecap="butt" stroke-linejoin="miter"><path d="M0.6 0.6H8.2V8.2H0.6Z"/><path d="M2.6 8.2V10.2H10.2V2.6H8.2"/><path d="M4.4 2.5V6.3M2.5 4.4H6.3"/></svg>
<svg style="position:absolute;left:1135px;top:169px" width="10" height="10" viewBox="0 0 10 10" fill="none" stroke="#555" stroke-width="1.25" stroke-linecap="round" stroke-linejoin="round" stroke-linecap="butt" stroke-linejoin="miter"><path d="M6.5 2.3V0.6H0.6V9.6H2.5"/><path d="M2.5 3.5H9.6V9.6H2.5Z"/><path d="M4.8 6H7.3V8H4.8Z"/></svg>
<svg style="position:absolute;left:1154.5px;top:169px" width="10" height="10" viewBox="0 0 10 10" fill="none" stroke="#555" stroke-width="1.25" stroke-linecap="round" stroke-linejoin="round" stroke-linecap="butt" stroke-linejoin="miter"><path d="M6.5 2.3V0.6H0.6V9.6H2.5"/><path d="M2.5 3H10.1V9.6H2.5Z"/><path d="M4.8 4.5L7.8 8M7.8 4.5L4.8 8M4.2 4.5V8"/></svg>
<svg style="position:absolute;left:1174px;top:169px" width="10" height="10" viewBox="0 0 10 10" fill="none" stroke="#555" stroke-width="1.25" stroke-linecap="round" stroke-linejoin="round" stroke-linecap="butt" stroke-linejoin="miter"><path d="M0.3 0.8H10.3M0.8 3.3H5.5M1.8 5.8H4M2.5 8.8H3M4.2 9.5L9.5 4.2L10.3 5L5 10.3H4.2Z"/></svg>
<svg style="position:absolute;left:1193.5px;top:169px" width="10" height="10" viewBox="0 0 10 10" fill="none" stroke="#555" stroke-width="1.25" stroke-linecap="round" stroke-linejoin="round" stroke-linecap="butt" stroke-linejoin="miter"><path d="M2.2 3.2A1.6 1.6 0 1 0 2.3 0.1M2.2 0.2V4.5H3.5L7.5 9.6V4.2L9.8 1.2M7.2 1.2H10M0.8 9.5H1.2M9.3 9.5H9.7M0.8 7.2V9.6"/></svg>
<svg style="position:absolute;left:1213.8px;top:169px" width="10" height="10" viewBox="0 0 10 10" fill="none" stroke="#555" stroke-width="1.25" stroke-linecap="round" stroke-linejoin="round" stroke-linecap="butt" stroke-linejoin="miter"><path d="M1 5.8V9.6M4.2 7.2V9.6M7.2 5.8V9.6M9.3 6.5V9.6M1 4L4.2 1.8L6.5 3.5L9.5 0.6M6.8 0.6H9.6V3.4"/></svg>
<svg style="position:absolute;left:1233px;top:169px" width="10" height="10" viewBox="0 0 10 10" fill="none" stroke="#555" stroke-width="1.25" stroke-linecap="round" stroke-linejoin="round" stroke-linecap="butt" stroke-linejoin="miter"><path d="M3.5 0.8H9.5V5.5M0.8 2.5V10.2H8V8.5M2.5 8.2L5.2 5.2L6.3 6.5L9.5 3.2M7.5 3.2H9.5V5.2"/></svg>
<svg style="position:absolute;left:1252.2px;top:169px" width="10" height="10" viewBox="0 0 10 10" fill="none" stroke="#555" stroke-width="1.25" stroke-linecap="round" stroke-linejoin="round" stroke-linecap="butt" stroke-linejoin="miter"><path d="M0.6 0.6H4.3V5H0.6ZM0.6 6.5H9.6V9.6H0.6ZM4.3 6.5V9.6M6.5 5V1.5M4.8 3L6.5 1.2L8.2 3"/></svg>
<svg style="position:absolute;left:1271.7px;top:169px" width="10" height="10" viewBox="0 0 10 10" fill="none" stroke="#555" stroke-width="1.25" stroke-linecap="round" stroke-linejoin="round" stroke-linecap="butt" stroke-linejoin="miter"><path d="M7.5 0.5L10.5 3.5L3.5 10.5L0.5 7.5Z"/><path d="M3.6 6.2L4.8 7.4M5 4.8L6.2 6M6.4 3.4L7.6 4.6" stroke-width="0.9"/></svg>
<svg style="position:absolute;left:1291.2px;top:169px" width="10" height="10" viewBox="0 0 10 10" fill="none" stroke="#555" stroke-width="1.25" stroke-linecap="round" stroke-linejoin="round" stroke-linecap="butt" stroke-linejoin="miter"><path d="M0.6 9.6V4L5 0.6L9.4 4V9.6Z"/><path d="M2.8 5.5H4.3V8H2.8ZM5.7 5.5H7.2V8H5.7Z" stroke-width="1"/></svg>
<svg style="position:absolute;left:1311px;top:169px" width="10" height="10" viewBox="0 0 10 10" fill="none" stroke="#555" stroke-width="1.25" stroke-linecap="round" stroke-linejoin="round" stroke-linecap="butt" stroke-linejoin="miter"><path d="M0.6 3V0.6H3M7 0.6H9.4V3M9.4 7V9.4H7M3 9.4H0.6V7"/></svg>
<div class="r" style="left:130px;top:184.2px;width:888px;height:20.0px;background:#e7e8ea;"></div>
<div class="r" style="left:130px;top:204.2px;width:888px;height:20.875px;background:#fff4c8;"></div>
<div class="r" style="left:130px;top:225.07px;width:888px;height:20.875px;background:#fafafb;"></div>
<div class="r" style="left:130px;top:245.95px;width:888px;height:20.875px;background:#fff;"></div>
<div class="r" style="left:130px;top:266.82px;width:888px;height:20.875px;background:#fafafb;"></div>
<div class="r" style="left:130px;top:287.7px;width:888px;height:20.875px;background:#fff;"></div>
<div class="r" style="left:130px;top:308.57px;width:888px;height:20.875px;background:#fafafb;"></div>
<div class="r" style="left:130px;top:329.45px;width:888px;height:20.875px;background:#fff;"></div>
<div class="r" style="left:130px;top:350.32px;width:888px;height:20.875px;background:#fafafb;"></div>
<div class="r" style="left:130px;top:371.2px;width:888px;height:20.875px;background:#fff;"></div>
<div class="r" style="left:130px;top:392.07px;width:888px;height:20.875px;background:#fafafb;"></div>
<div class="r" style="left:130px;top:412.95px;width:888px;height:20.875px;background:#fff;"></div>
<div class="r" style="left:130px;top:433.82px;width:888px;height:20.875px;background:#fafafb;"></div>
<div class="r" style="left:130px;top:454.7px;width:888px;height:20.875px;background:#fff;"></div>
<div class="r" style="left:130px;top:475.57px;width:888px;height:20.875px;background:#fafafb;"></div>
<div class="r" style="left:130px;top:496.45px;width:888px;height:20.875px;background:#fff;"></div>
<div class="r" style="left:130px;top:517.33px;width:888px;height:20.875px;background:#fafafb;"></div>
<div class="r" style="left:130px;top:538.2px;width:888px;height:20.875px;background:#fff;"></div>
<div class="r" style="left:130px;top:559.08px;width:888px;height:20.875px;background:#fafafb;"></div>
<div class="r" style="left:130px;top:204.0px;width:888px;height:1px;background:#dadada;"></div>
<div class="r" style="left:130px;top:224.87px;width:888px;height:1px;background:#dadada;"></div>
<div class="r" style="left:130px;top:245.74px;width:888px;height:1px;background:#dadada;"></div>
<div class="r" style="left:130px;top:266.61px;width:888px;height:1px;background:#dadada;"></div>
<div class="r" style="left:130px;top:287.48px;width:888px;height:1px;background:#dadada;"></div>
<div class="r" style="left:130px;top:308.35px;width:888px;height:1px;background:#dadada;"></div>
<div class="r" style="left:130px;top:329.22px;width:888px;height:1px;background:#dadada;"></div>
<div class="r" style="left:130px;top:350.09px;width:888px;height:1px;background:#dadada;"></div>
<div class="r" style="left:130px;top:370.96px;width:888px;height:1px;background:#dadada;"></div>
<div class="r" style="left:130px;top:391.83px;width:888px;height:1px;background:#dadada;"></div>
<div class="r" style="left:130px;top:412.7px;width:888px;height:1px;background:#dadada;"></div>
<div class="r" style="left:130px;top:433.57px;width:888px;height:1px;background:#dadada;"></div>
<div class="r" style="left:130px;top:454.44px;width:888px;height:1px;background:#dadada;"></div>
<div class="r" style="left:130px;top:475.31px;width:888px;height:1px;background:#dadada;"></div>
<div class="r" style="left:130px;top:496.18px;width:888px;height:1px;background:#dadada;"></div>
<div class="r" style="left:130px;top:517.05px;width:888px;height:1px;background:#dadada;"></div>
<div class="r" style="left:130px;top:537.92px;width:888px;height:1px;background:#dadada;"></div>
<div class="r" style="left:130px;top:558.79px;width:888px;height:1px;background:#dadada;"></div>
<div class="r" style="left:130px;top:579.66px;width:888px;height:1px;background:#dadada;"></div>
<div class="r" style="left:130px;top:184.2px;width:888px;height:1px;background:#d8d8d8;"></div>
<div class="r" style="left:129.5px;top:184.2px;width:1px;height:395.75px;background:#dadada;"></div>
<div class="r" style="left:154.0px;top:184.2px;width:1px;height:395.75px;background:#dadada;"></div>
<div class="r" style="left:223.5px;top:184.2px;width:1px;height:395.75px;background:#dadada;"></div>
<div class="r" style="left:307.0px;top:184.2px;width:1px;height:395.75px;background:#dadada;"></div>
<div class="r" style="left:377.0px;top:184.2px;width:1px;height:395.75px;background:#dadada;"></div>
<div class="r" style="left:419.0px;top:184.2px;width:1px;height:395.75px;background:#dadada;"></div>
<div class="r" style="left:461.0px;top:184.2px;width:1px;height:395.75px;background:#dadada;"></div>
<div class="r" style="left:530.0px;top:184.2px;width:1px;height:395.75px;background:#dadada;"></div>
<div class="r" style="left:579.0px;top:184.2px;width:1px;height:395.75px;background:#dadada;"></div>
<div class="r" style="left:649.0px;top:184.2px;width:1px;height:395.75px;background:#dadada;"></div>
<div class="r" style="left:697.5px;top:184.2px;width:1px;height:395.75px;background:#dadada;"></div>
<div class="r" style="left:760.0px;top:184.2px;width:1px;height:395.75px;background:#dadada;"></div>
<div class="r" style="left:830.0px;top:184.2px;width:1px;height:395.75px;background:#dadada;"></div>
<div class="r" style="left:878.5px;top:184.2px;width:1px;height:395.75px;background:#dadada;"></div>
<div class="r" style="left:948.0px;top:184.2px;width:1px;height:395.75px;background:#dadada;"></div>
<div class="r" style="left:1017.5px;top:184.2px;width:1px;height:395.75px;background:#dadada;"></div>
<div class="t" style="left:42.25px;width:200px;text-align:center;top:189.0px;font-size:9px;color:#333;font-weight:bold;">序号</div>
<div class="t" style="left:89.25px;width:200px;text-align:center;top:189.0px;font-size:9px;color:#333;font-weight:bold;">项目</div>
<div class="t" style="left:164.75px;width:200px;text-align:center;top:189.0px;font-size:9px;color:#333;font-weight:bold;"><span style="color:#e05555;font-weight:normal;font-size:9px;position:relative;top:-1.5px;margin-right:1.5px">*</span>存货名称</div>
<div class="t" style="left:242.5px;width:200px;text-align:center;top:189.0px;font-size:9px;color:#333;font-weight:bold;">规格型号</div>
<div class="t" style="left:297.5px;width:200px;text-align:center;top:189.0px;font-size:9px;color:#333;font-weight:bold;"><span style="color:#e05555;font-weight:normal;font-size:9px;position:relative;top:-1.5px;margin-right:1.5px">*</span>销售单位</div>
<div class="t" style="left:339.5px;width:200px;text-align:center;top:189.0px;font-size:9px;color:#333;font-weight:bold;"><span style="color:#e05555;font-weight:normal;font-size:9px;position:relative;top:-1.5px;margin-right:1.5px">*</span>数量</div>
<div class="t" style="left:396.0px;width:200px;text-align:center;top:189.0px;font-size:9px;color:#333;font-weight:bold;">最新含税售价</div>
<div class="t" style="left:454.0px;width:200px;text-align:center;top:189.0px;font-size:9px;color:#333;font-weight:bold;"><span style="color:#e05555;font-weight:normal;font-size:9px;position:relative;top:-1.5px;margin-right:1.5px">*</span>单价</div>
<div class="t" style="left:513.5px;width:200px;text-align:center;top:189.0px;font-size:9px;color:#333;font-weight:bold;"><span style="color:#e05555;font-weight:normal;font-size:9px;position:relative;top:-1.5px;margin-right:1.5px">*</span>税率%</div>
<div class="t" style="left:572.75px;width:200px;text-align:center;top:189.0px;font-size:9px;color:#333;font-weight:bold;"><span style="color:#e05555;font-weight:normal;font-size:9px;position:relative;top:-1.5px;margin-right:1.5px">*</span>含税单价</div>
<div class="t" style="left:628.25px;width:200px;text-align:center;top:189.0px;font-size:9px;color:#333;font-weight:bold;"><span style="color:#e05555;font-weight:normal;font-size:9px;position:relative;top:-1.5px;margin-right:1.5px">*</span>金额</div>
<div class="t" style="left:694.5px;width:200px;text-align:center;top:189.0px;font-size:9px;color:#333;font-weight:bold;"><span style="color:#e05555;font-weight:normal;font-size:9px;position:relative;top:-1.5px;margin-right:1.5px">*</span>含税金额</div>
<div class="t" style="left:754.75px;width:200px;text-align:center;top:189.0px;font-size:9px;color:#333;font-weight:bold;">现存量</div>
<div class="t" style="left:813.75px;width:200px;text-align:center;top:189.0px;font-size:9px;color:#333;font-weight:bold;">现存量说明</div>
<div class="t" style="left:883.25px;width:200px;text-align:center;top:189.0px;font-size:9px;color:#333;font-weight:bold;">备注</div>
<div class="t" style="left:42.25px;width:200px;text-align:center;top:208.8px;font-size:9.3px;color:#444;font-weight:normal;">1</div>
<div class="t" style="left:228px;top:209.10000000000002px;font-size:9px;color:#333;font-weight:normal;">鼠链</div>
<div class="t" style="left:381px;top:209.10000000000002px;font-size:9px;color:#333;font-weight:normal;">条</div>
<div class="t" style="right:882.8px;top:208.8px;font-size:9.6px;color:#333;font-weight:normal;transform:scaleX(0.92);transform-origin:100% 0;">1.00</div>
<div class="t" style="right:813.8px;top:208.8px;font-size:9.6px;color:#333;font-weight:normal;transform:scaleX(0.92);transform-origin:100% 0;">1.00</div>
<div class="t" style="right:764.8px;top:208.8px;font-size:9.6px;color:#333;font-weight:normal;transform:scaleX(0.92);transform-origin:100% 0;">1.00</div>
<div class="t" style="right:694.8px;top:208.8px;font-size:9.6px;color:#333;font-weight:normal;transform:scaleX(0.92);transform-origin:100% 0;">0.00%</div>
<div class="t" style="right:646.3px;top:208.8px;font-size:9.6px;color:#333;font-weight:normal;transform:scaleX(0.92);transform-origin:100% 0;">1.00</div>
<div class="t" style="right:583.8px;top:208.8px;font-size:9.6px;color:#333;font-weight:normal;transform:scaleX(0.92);transform-origin:100% 0;">1.00</div>
<div class="t" style="right:513.8px;top:208.8px;font-size:9.6px;color:#333;font-weight:normal;transform:scaleX(0.92);transform-origin:100% 0;">1.00</div>
<div class="t" style="left:42.25px;width:200px;text-align:center;top:229.67px;font-size:9.3px;color:#444;font-weight:normal;">2</div>
<div class="t" style="left:228px;top:229.97px;font-size:9px;color:#333;font-weight:normal;">鼠链</div>
<div class="t" style="left:381px;top:229.97px;font-size:9px;color:#333;font-weight:normal;">条</div>
<div class="t" style="right:882.8px;top:229.67px;font-size:9.6px;color:#333;font-weight:normal;transform:scaleX(0.92);transform-origin:100% 0;">1.00</div>
<div class="t" style="right:813.8px;top:229.67px;font-size:9.6px;color:#333;font-weight:normal;transform:scaleX(0.92);transform-origin:100% 0;">1.00</div>
<div class="t" style="right:764.8px;top:229.67px;font-size:9.6px;color:#333;font-weight:normal;transform:scaleX(0.92);transform-origin:100% 0;">1.00</div>
<div class="t" style="right:694.8px;top:229.67px;font-size:9.6px;color:#333;font-weight:normal;transform:scaleX(0.92);transform-origin:100% 0;">0.00%</div>
<div class="t" style="right:646.3px;top:229.67px;font-size:9.6px;color:#333;font-weight:normal;transform:scaleX(0.92);transform-origin:100% 0;">1.00</div>
<div class="t" style="right:583.8px;top:229.67px;font-size:9.6px;color:#333;font-weight:normal;transform:scaleX(0.92);transform-origin:100% 0;">1.00</div>
<div class="t" style="right:513.8px;top:229.67px;font-size:9.6px;color:#333;font-weight:normal;transform:scaleX(0.92);transform-origin:100% 0;">1.00</div>
<div class="t" style="left:42.25px;width:200px;text-align:center;top:250.55px;font-size:9.3px;color:#444;font-weight:normal;">3</div>
<div class="t" style="left:228px;top:250.85000000000002px;font-size:9px;color:#333;font-weight:normal;">鼠链</div>
<div class="t" style="left:381px;top:250.85000000000002px;font-size:9px;color:#333;font-weight:normal;">条</div>
<div class="t" style="right:882.8px;top:250.55px;font-size:9.6px;color:#333;font-weight:normal;transform:scaleX(0.92);transform-origin:100% 0;">1.00</div>
<div class="t" style="right:813.8px;top:250.55px;font-size:9.6px;color:#333;font-weight:normal;transform:scaleX(0.92);transform-origin:100% 0;">1.00</div>
<div class="t" style="right:764.8px;top:250.55px;font-size:9.6px;color:#333;font-weight:normal;transform:scaleX(0.92);transform-origin:100% 0;">1.00</div>
<div class="t" style="right:694.8px;top:250.55px;font-size:9.6px;color:#333;font-weight:normal;transform:scaleX(0.92);transform-origin:100% 0;">0.00%</div>
<div class="t" style="right:646.3px;top:250.55px;font-size:9.6px;color:#333;font-weight:normal;transform:scaleX(0.92);transform-origin:100% 0;">1.00</div>
<div class="t" style="right:583.8px;top:250.55px;font-size:9.6px;color:#333;font-weight:normal;transform:scaleX(0.92);transform-origin:100% 0;">1.00</div>
<div class="t" style="right:513.8px;top:250.55px;font-size:9.6px;color:#333;font-weight:normal;transform:scaleX(0.92);transform-origin:100% 0;">1.00</div>
<div class="t" style="left:42.25px;width:200px;text-align:center;top:271.43px;font-size:9.3px;color:#cfcfcf;font-weight:normal;">4</div>
<div class="t" style="left:42.25px;width:200px;text-align:center;top:292.3px;font-size:9.3px;color:#cfcfcf;font-weight:normal;">5</div>
<div class="t" style="left:42.25px;width:200px;text-align:center;top:313.18px;font-size:9.3px;color:#cfcfcf;font-weight:normal;">6</div>
<div class="t" style="left:42.25px;width:200px;text-align:center;top:334.05px;font-size:9.3px;color:#cfcfcf;font-weight:normal;">7</div>
<div class="t" style="left:42.25px;width:200px;text-align:center;top:354.93px;font-size:9.3px;color:#cfcfcf;font-weight:normal;">8</div>
<div class="t" style="left:42.25px;width:200px;text-align:center;top:375.8px;font-size:9.3px;color:#cfcfcf;font-weight:normal;">9</div>
<div class="t" style="left:42.25px;width:200px;text-align:center;top:396.68px;font-size:9.3px;color:#cfcfcf;font-weight:normal;">10</div>
<div class="t" style="left:42.25px;width:200px;text-align:center;top:417.55px;font-size:9.3px;color:#cfcfcf;font-weight:normal;">11</div>
<div class="t" style="left:42.25px;width:200px;text-align:center;top:438.43px;font-size:9.3px;color:#cfcfcf;font-weight:normal;">12</div>
<div class="t" style="left:42.25px;width:200px;text-align:center;top:459.3px;font-size:9.3px;color:#cfcfcf;font-weight:normal;">13</div>
<div class="t" style="left:42.25px;width:200px;text-align:center;top:480.18px;font-size:9.3px;color:#cfcfcf;font-weight:normal;">14</div>
<div class="t" style="left:42.25px;width:200px;text-align:center;top:501.05px;font-size:9.3px;color:#cfcfcf;font-weight:normal;">15</div>
<div class="t" style="left:42.25px;width:200px;text-align:center;top:521.93px;font-size:9.3px;color:#cfcfcf;font-weight:normal;">16</div>
<div class="t" style="left:42.25px;width:200px;text-align:center;top:542.8px;font-size:9.3px;color:#cfcfcf;font-weight:normal;">17</div>
<div class="t" style="left:42.25px;width:200px;text-align:center;top:563.68px;font-size:9.3px;color:#cfcfcf;font-weight:normal;">18</div>
<div class="r" style="left:130px;top:583px;width:888px;height:20.5px;background:#f2f2f2;border:1px solid #d8d8d8;box-sizing:border-box;"></div>
<div class="t" style="left:133.5px;top:587.5px;font-size:9.6px;color:#333;font-weight:bold;">合计</div>
<div class="t" style="right:880px;top:587.5px;font-size:9.5px;color:#333;font-weight:bold;">3.00</div>
<div class="t" style="right:580.5px;top:587.5px;font-size:9.5px;color:#333;font-weight:bold;">3.00</div>
<div class="t" style="right:510px;top:587.5px;font-size:9.5px;color:#333;font-weight:bold;">3.00</div>
<div class="t" style="right:1143.5px;top:611.6px;font-size:9px;color:#555;font-weight:normal;">备注</div>
<div class="r" style="left:198px;top:623.5px;width:1045px;height:1px;background:#e6e6e6;"></div>
<div class="t" style="right:1143.5px;top:630.5px;font-size:9px;color:#555;font-weight:normal;">制单人</div><div class="t" style="left:198.5px;top:630px;font-size:9.3px;color:#333;font-weight:normal;transform:scaleX(0.93);transform-origin:0 0;">001</div><div class="r" style="left:198.0px;top:642px;width:78px;height:1px;background:#e6e6e6;"></div>
<div class="t" style="right:991px;top:630.5px;font-size:9px;color:#555;font-weight:normal;">审核人</div><div class="t" style="left:351px;top:630px;font-size:9.3px;color:#333;font-weight:normal;transform:scaleX(0.93);transform-origin:0 0;">001</div><div class="r" style="left:350.5px;top:642px;width:78px;height:1px;background:#e6e6e6;"></div>
<div class="t" style="right:837.5px;top:630.5px;font-size:9px;color:#555;font-weight:normal;">审核日期</div><div class="t" style="left:504.5px;top:630px;font-size:9.3px;color:#333;font-weight:normal;transform:scaleX(0.93);transform-origin:0 0;">2018-12-24</div><div class="r" style="left:504.0px;top:642px;width:78px;height:1px;background:#e6e6e6;"></div>
<div class="t" style="right:683.5px;top:630.5px;font-size:9px;color:#555;font-weight:normal;">打印次数</div><div class="t" style="left:658.5px;top:630px;font-size:9.3px;color:#333;font-weight:normal;transform:scaleX(0.93);transform-origin:0 0;">0</div><div class="r" style="left:658.0px;top:642px;width:78px;height:1px;background:#e6e6e6;"></div>
<div class="t" style="right:530.5px;top:630.5px;font-size:9px;color:#555;font-weight:normal;">变更人</div><div class="r" style="left:811.0px;top:642px;width:78px;height:1px;background:#e6e6e6;"></div>
<div class="t" style="right:376.70000000000005px;top:630.5px;font-size:9px;color:#555;font-weight:normal;">变更日期</div><div class="r" style="left:964.8px;top:642px;width:78px;height:1px;background:#e6e6e6;"></div>
<div class="r" style="left:111px;top:645.5px;width:1227px;height:4px;background:#eef3fb;"></div>
<svg style="position:absolute;left:1309px;top:534px" width="29" height="49" viewBox="0 0 29 49"><ellipse cx="27" cy="42" rx="5" ry="6.5" fill="#e9a33b" stroke="#c98325" stroke-width="0.8"/><circle cx="5.5" cy="28.5" r="4.5" fill="#e9a33b" stroke="#c98325" stroke-width="0.8"/><circle cx="5.8" cy="28.5" r="2.2" fill="#fff"/><ellipse cx="28" cy="19" rx="22.5" ry="17.3" fill="#e9a33b" stroke="#c98325" stroke-width="0.8"/><path d="M20 2.5Q22 0 24 2.5" stroke="#c98325" stroke-width="1" fill="none"/><ellipse cx="28.5" cy="21" rx="17.5" ry="11.8" fill="#fbe9d2"/><circle cx="15.5" cy="21" r="1.4" fill="#333"/><ellipse cx="15" cy="27" rx="2.8" ry="2" fill="#f4a8a8"/><path d="M21 25Q22.5 27 24 25Q25.5 27 27 25" stroke="#333" stroke-width="0.7" fill="none"/><rect x="28" y="0" width="1.3" height="49" fill="#6e4218"/></svg>
</body></html>
